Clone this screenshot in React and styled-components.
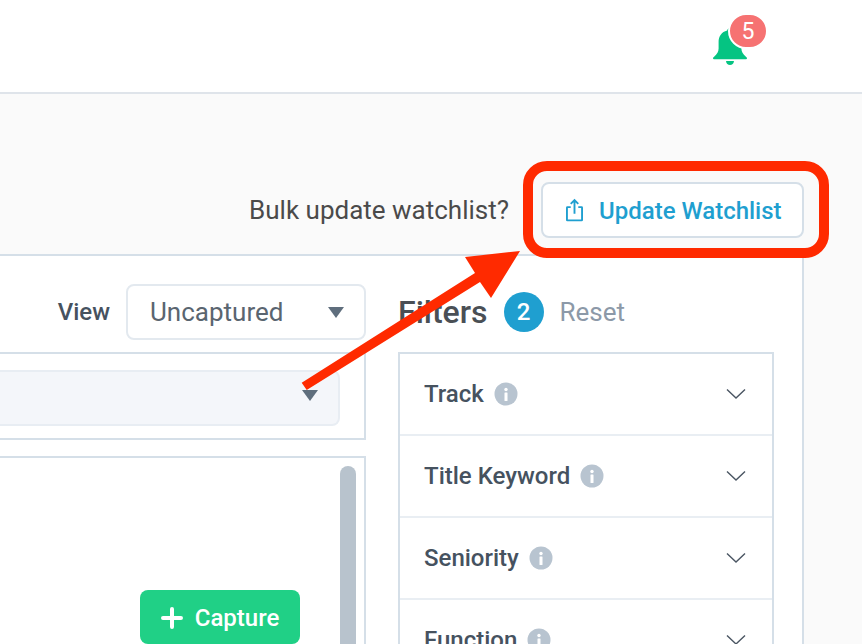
import styled, { createGlobalStyle } from "styled-components";

const GlobalStyle = createGlobalStyle`
  html, body {
    margin: 0;
    padding: 0;
    background: #fafafa;
  }
  * {
    box-sizing: border-box;
  }
`;

const FILTERS = ["Track", "Title Keyword", "Seniority", "Function"];

export default function App() {
  return (
    <Page>
      <GlobalStyle />
      <Header>
        <BellWrap>
          <svg width="34" height="38" viewBox="0 0 34 38">
            <path
              d="M17 0c-1.6 0-2.6 1-2.8 2.6C8.5 4 5.6 8.6 5.6 14v6.5c0 3.2-1.6 5.6-4 7.7-.8.6-1.6 1.2-1.6 2.1 0 .6.4.9 1 .9h32c.6 0 1-.3 1-.9 0-.9-.8-1.500-1.600-2.100-2.400-2.100-4-4.500-4-7.700V14c0-5.400-2.900-10-8.600-11.400C19.600 1 18.600 0 17 0z"
              fill="#05c482"
            />
            <path d="M13 33h8c-.2 2.400-1.900 4-4 4s-3.800-1.600-4-4z" fill="#05c482" />
          </svg>
          <Count>5</Count>
        </BellWrap>
      </Header>

      <ActionRow>
        <BulkText>Bulk update watchlist?</BulkText>
        <UpdateButton>
          <svg width="17" height="24" viewBox="0 0 18 24" fill="none" stroke="#1f9fd0" strokeWidth="2">
            <path d="M5 9H1.500a.5.5 0 0 0-.5.5V22.500a.5.5 0 0 0 .5.5h15a.5.5 0 0 0 .5-.5V9.500a.5.5 0 0 0-.5-.5H13" />
            <path d="M9 16V1.500M5 5.500l4-4 4 4" />
          </svg>
          <UpdateLabel>Update Watchlist</UpdateLabel>
        </UpdateButton>
      </ActionRow>

      <Card>
        <LeftColumn>
          <ViewRow>
            <ViewLabel>View</ViewLabel>
            <ViewSelect>
              Uncaptured
              <Caret />
            </ViewSelect>
          </ViewRow>
          <FieldBox>
            <Field>
              <Caret />
            </Field>
          </FieldBox>
          <ListBox>
            <CaptureButton>
              <svg width="22" height="22" viewBox="0 0 22 22" stroke="#fff" strokeWidth="4" strokeLinecap="round">
                <path d="M11 2v18M2 11h18" />
              </svg>
              <span>Capture</span>
            </CaptureButton>
            <ScrollThumb />
          </ListBox>
        </LeftColumn>

        <FilterColumn>
          <FilterHead>
            <FilterTitle>Filters</FilterTitle>
            <FilterCount>2</FilterCount>
            <ResetLink>Reset</ResetLink>
          </FilterHead>
          <FilterBox>
            {FILTERS.map((name) => (
              <FilterRow key={name}>
                <FilterName>{name}</FilterName>
                <InfoDot>
                  <svg width="24" height="24" viewBox="0 0 24 24">
                    <circle cx="12" cy="12" r="11.500" fill="#b8c4d0" />
                    <circle cx="12" cy="7.500" r="1.700" fill="#fff" />
                    <rect x="10.500" y="10.500" width="3" height="8.500" rx="0.500" fill="#fff" />
                  </svg>
                </InfoDot>
                <Chevron width="20" height="12" viewBox="0 0 20 12" fill="none" stroke="#4a5562" strokeWidth="1.400">
                  <path d="M1 1.500L10 10l9-8.500" />
                </Chevron>
              </FilterRow>
            ))}
          </FilterBox>
        </FilterColumn>
      </Card>

      <Highlight />
      <Arrow width="862" height="644" viewBox="0 0 862 644">
        <path
          d="M301.700 382.700L475 273L465 257L520 251L491 298L480 282L306.700 390Z"
          fill="#ff2a00"
        />
      </Arrow>
    </Page>
  );
}

const Page = styled.div`
  position: relative;
  width: 862px;
  height: 644px;
  overflow: hidden;
  background: #fafafa;
  font-family: Roboto, "Liberation Sans", sans-serif;
`;

const Header = styled.div`
  height: 94px;
  display: flex;
  justify-content: flex-end;
  padding: 15px 96px 0 0;
  background: #fff;
  border-bottom: 2px solid #dfe4ea;
`;

const BellWrap = styled.div`
  position: relative;
  width: 53px;
  height: 50px;
  padding-top: 13px;
`;

const Count = styled.span`
  position: absolute;
  top: -2px;
  right: -2px;
  width: 40px;
  height: 36px;
  display: flex;
  align-items: center;
  justify-content: center;
  border: 2px solid #fff;
  border-radius: 18px;
  background: #f67272;
  color: #fff;
  font-size: 23px;
`;

const ActionRow = styled.div`
  height: 160px;
  display: flex;
  align-items: flex-end;
  justify-content: flex-end;
  gap: 32px;
  padding: 0 58px 16px 0;
`;

const BulkText = styled.span`
  height: 56px;
  line-height: 57px;
  color: #4a4a4a;
  font-size: 26px;
`;

const UpdateButton = styled.button`
  width: 263px;
  height: 56px;
  display: flex;
  align-items: center;
  gap: 16px;
  padding: 0 0 0 23px;
  background: #fff;
  border: 2px solid #d5dfe8;
  border-radius: 8px;
  color: #1f9fd0;
  font-family: inherit;
  font-size: 24px;
  font-weight: 500;
`;

const UpdateLabel = styled.span`
  padding-top: 1px;
`;

const Card = styled.div`
  height: 390px;
  margin-right: 58px;
  display: flex;
  background: #fff;
  border-top: 2px solid #d5dfe8;
  border-right: 2px solid #d5dfe8;
`;

const LeftColumn = styled.div`
  width: 366px;
  flex-shrink: 0;
  padding-top: 28px;
  display: flex;
  flex-direction: column;
`;

const ViewRow = styled.div`
  height: 56px;
  display: flex;
  align-items: center;
  justify-content: flex-end;
  gap: 16px;
`;

const ViewLabel = styled.span`
  color: #46525f;
  font-size: 24px;
  font-weight: 500;
`;

const ViewSelect = styled.div`
  width: 240px;
  height: 56px;
  display: flex;
  align-items: center;
  justify-content: space-between;
  padding: 0 20px 0 22px;
  border: 2px solid #e3e9ef;
  border-radius: 8px;
  color: #5a6570;
  font-size: 26px;
`;

const Caret = styled.span`
  width: 0;
  height: 0;
  border-left: 8.5px solid transparent;
  border-right: 8.5px solid transparent;
  border-top: 11px solid #5f6e7d;
`;

const FieldBox = styled.div`
  height: 88px;
  margin-top: 12px;
  padding: 16px 24px 12px 0;
  border: 2px solid #d5dfe8;
  border-left: none;
`;

const Field = styled.div`
  height: 56px;
  display: flex;
  align-items: center;
  justify-content: flex-end;
  padding: 0 20px 5px 0;
  background: #f4f6fa;
  border: 2px solid #e8edf3;
  border-left: none;
  border-radius: 0 8px 8px 0;
`;

const ListBox = styled.div`
  flex: 1;
  margin-top: 16px;
  display: flex;
  justify-content: flex-end;
  gap: 40px;
  padding: 8px 8px 0 0;
  border: 2px solid #d5dfe8;
  border-left: none;
  border-bottom: none;
`;

const CaptureButton = styled.button`
  width: 160px;
  height: 54px;
  margin-top: 124px;
  display: flex;
  align-items: center;
  justify-content: center;
  gap: 12px;
  padding: 2px 0 0;
  background: #20d086;
  border: none;
  border-radius: 8px;
  color: #fff;
  font-family: inherit;
  font-size: 24px;
  font-weight: 500;
`;

const ScrollThumb = styled.div`
  width: 16px;
  height: 220px;
  border-radius: 8px;
  background: #b8c3cd;
`;

const FilterColumn = styled.div`
  width: 376px;
  margin-left: 32px;
  padding-top: 28px;
`;

const FilterHead = styled.div`
  height: 56px;
  display: flex;
  align-items: center;
`;

const FilterTitle = styled.span`
  color: #4a4f55;
  font-size: 32px;
  font-weight: 500;
`;

const FilterCount = styled.span`
  width: 40px;
  height: 40px;
  margin-left: 16px;
  display: flex;
  align-items: center;
  justify-content: center;
  border-radius: 50%;
  background: #1f9fd0;
  color: #fff;
  font-size: 24px;
  font-weight: 500;
`;

const ResetLink = styled.span`
  margin-left: 16px;
  color: #8c99a8;
  font-size: 26px;
`;

const FilterBox = styled.div`
  margin-top: 12px;
  border: 2px solid #d5dfe8;
`;

const FilterRow = styled.div`
  height: 82px;
  display: flex;
  align-items: center;
  padding: 0 26px 0 24px;
  border-bottom: 2px solid #e9eef3;
`;

const FilterName = styled.span`
  color: #46525f;
  font-size: 24px;
  font-weight: 500;
`;

const InfoDot = styled.span`
  display: flex;
  margin-left: 10px;
`;

const Chevron = styled.svg`
  margin-left: auto;
`;

const Highlight = styled.div`
  position: absolute;
  left: 523px;
  top: 161px;
  width: 306px;
  height: 97px;
  border: 10px solid #ff2a00;
  border-radius: 24px;
`;

const Arrow = styled.svg`
  position: absolute;
  left: 0;
  top: 0;
  pointer-events: none;
`;
